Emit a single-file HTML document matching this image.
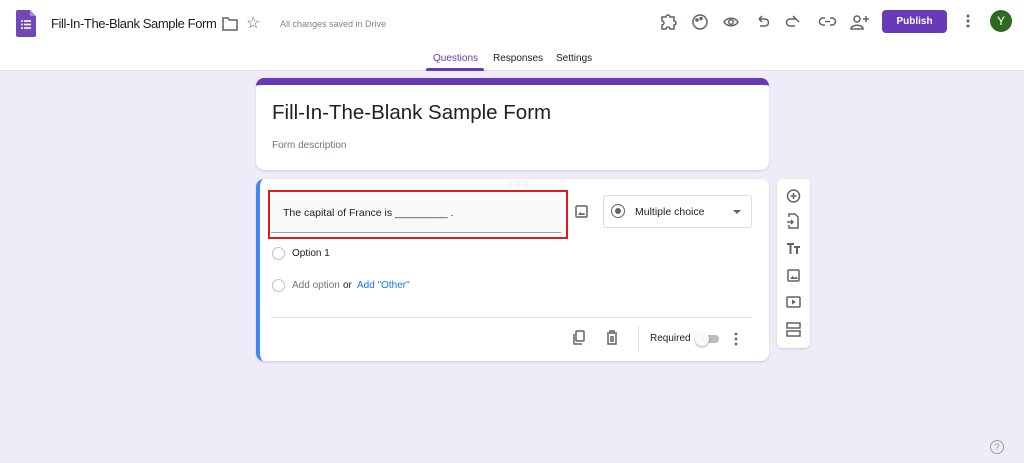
<!DOCTYPE html>
<html><head><style>
*{margin:0;padding:0;box-sizing:border-box}
body{width:1024px;height:463px;background:#f0ebf8;font-family:"Liberation Sans",Arial,sans-serif;position:relative;overflow:hidden;color:#202124}
.abs{position:absolute}
.hdr{left:0;top:0;width:1024px;height:71px;background:#fff;border-bottom:1px solid #e0dde8}
svg{display:block}
</style></head><body>
<div class="abs hdr"></div>
<svg class="abs" style="left:16px;top:10px" width="20" height="27" viewBox="0 0 20 27"><path d="M2 0h12l6 6v19a2 2 0 0 1-2 2H2a2 2 0 0 1-2-2V2a2 2 0 0 1 2-2z" fill="#7248b9"/><path d="M14 0l6 6h-6z" fill="#a48ad4"/><g fill="#fff"><circle cx="6" cy="11" r="1"/><circle cx="6" cy="14.5" r="1"/><circle cx="6" cy="18" r="1"/><rect x="8" y="10.2" width="7" height="1.6"/><rect x="8" y="13.7" width="7" height="1.6"/><rect x="8" y="17.2" width="7" height="1.6"/></g></svg>
<div class="abs" style="left:51px;top:16px;font-size:13px;letter-spacing:-0.4px;color:#202124">Fill-In-The-Blank Sample Form</div>
<svg class="abs" style="left:222px;top:17px" width="16" height="14" viewBox="0 0 16 14"><path d="M1 1h5l1.5 2H15v10H1z" fill="none" stroke="#5f6368" stroke-width="1.5"/></svg>
<div class="abs" style="left:246px;top:13px;font-size:16px;color:#5f6368">☆</div>
<div class="abs" style="left:280px;top:19px;font-size:9px;color:#80868b">All changes saved in Drive</div>
<svg class="abs" style="left:660px;top:13px" width="210" height="18" viewBox="0 0 210 18" fill="none" stroke="#5f6368" stroke-width="1.5">
<path d="M2 4h4a2 2 0 0 1 4 0h4v4a2 2 0 0 1 0 4v4h-4a2 2 0 0 0-4 0H2v-4a2 2 0 0 0 0-4z"/>
<circle cx="40" cy="9" r="7"/><circle cx="37" cy="7" r="1" fill="#5f6368"/><circle cx="41" cy="5.5" r="1" fill="#5f6368"/>
<path d="M64 9c3-5 11-5 14 0c-3 5-11 5-14 0z"/><circle cx="71" cy="9" r="2.3"/>
<path d="M99 6h6a3.5 3.5 0 0 1 0 7h-5M99 6l3-3M99 6l3 3"/>
<path d="M136 6h-6a3.5 3.5 0 0 0 0 7h5M136 6l-3-3M136 6l3 3"/>
<path d="M165 5h-2a3.5 3.5 0 0 0 0 7h2M170 5h2a3.5 3.5 0 0 1 0 7h-2M165 8.5h5"/>
<circle cx="197" cy="6" r="3"/><path d="M191 16c0-5 12-5 12 0z"/><path d="M203 6h6M206 3v6"/>
</svg>
<div class="abs" style="left:882px;top:10px;width:65px;height:23px;background:#673ab7;border-radius:4px;color:#fff;font-size:10px;font-weight:bold;text-align:center;line-height:23px">Publish</div>
<svg class="abs" style="left:966px;top:14px" width="4" height="14"><circle cx="2" cy="2" r="1.5" fill="#5f6368"/><circle cx="2" cy="7" r="1.5" fill="#5f6368"/><circle cx="2" cy="12" r="1.5" fill="#5f6368"/></svg>
<div class="abs" style="left:990px;top:10px;width:22px;height:22px;border-radius:50%;background:#2d6a1f;color:#fff;font-size:12px;text-align:center;line-height:22px">Y</div>
<div class="abs" style="left:433px;top:53px;font-size:10px;color:#673ab7">Questions</div>
<div class="abs" style="left:426px;top:68px;width:58px;height:3px;background:#673ab7;border-radius:2px 2px 0 0"></div>
<div class="abs" style="left:493px;top:53px;font-size:10px;color:#202124">Responses</div>
<div class="abs" style="left:556px;top:53px;font-size:10px;color:#202124">Settings</div>

<div class="abs" style="left:256px;top:78px;width:513px;height:92px;background:#fff;border-radius:8px;border-top:7px solid #673ab7;box-shadow:0 1px 2px rgba(0,0,0,.15)"></div>
<div class="abs" style="left:272px;top:101px;font-size:20.5px;color:#202124">Fill-In-The-Blank Sample Form</div>
<div class="abs" style="left:272px;top:140px;font-size:10px;color:#70757a">Form description</div>

<div class="abs" style="left:256px;top:179px;width:513px;height:182px;background:#fff;border-radius:8px;border-left:4px solid #4285f4;box-shadow:0 1px 2px rgba(0,0,0,.15)"></div>
<div class="abs" style="left:507px;top:181px;font-size:7px;color:#bbb;letter-spacing:1px">⋮⋮⋮</div>
<div class="abs" style="left:268px;top:190px;width:300px;height:49px;border:2px solid #e01b1b"></div>
<div class="abs" style="left:271px;top:193px;width:290px;height:40px;background:#f8f9fa;border-bottom:1px solid #9aa0a6"></div>
<div class="abs" style="left:283px;top:207px;font-size:10.5px;color:#202124">The capital of France is _________ .</div>
<svg class="abs" style="left:575px;top:205px" width="13" height="13" viewBox="0 0 13 13"><rect x="1" y="1" width="11" height="11" rx="1" fill="none" stroke="#5f6368" stroke-width="1.5"/><path d="M3 10l2.5-3 2 2 1.5-1.5L10 10z" fill="#5f6368"/></svg>
<div class="abs" style="left:603px;top:195px;width:149px;height:33px;border:1px solid #dadce0;border-radius:3px"></div>
<div class="abs" style="left:611px;top:204px;width:14px;height:14px;border:1.5px solid #5f6368;border-radius:50%"></div>
<div class="abs" style="left:615px;top:208px;width:6px;height:6px;background:#5f6368;border-radius:50%"></div>
<div class="abs" style="left:635px;top:206px;font-size:10.5px">Multiple choice</div>
<div class="abs" style="left:733px;top:210px;width:0;height:0;border-left:4px solid transparent;border-right:4px solid transparent;border-top:4px solid #5f6368"></div>
<div class="abs" style="left:272px;top:247px;width:13px;height:13px;border:1.5px solid #bdc1c6;border-radius:50%"></div>
<div class="abs" style="left:292px;top:248px;font-size:10px">Option 1</div>
<div class="abs" style="left:272px;top:279px;width:13px;height:13px;border:1.5px solid #bdc1c6;border-radius:50%"></div>
<div class="abs" style="left:292px;top:280px;font-size:10px;color:#70757a">Add option</div>
<div class="abs" style="left:343px;top:280px;font-size:10px;color:#202124">or</div>
<div class="abs" style="left:357px;top:280px;font-size:10px;color:#1a73e8">Add "Other"</div>
<div class="abs" style="left:271px;top:317px;width:481px;height:1px;background:#e0e0e0"></div>
<svg class="abs" style="left:572px;top:330px" width="50" height="16" viewBox="0 0 50 16" fill="none" stroke="#5f6368" stroke-width="1.5"><rect x="4" y="1" width="8" height="10" rx="1"/><path d="M2 4v10h8"/><path d="M35 3h10M38 3V1h4v2M36 4v10h8V4M39 6v6M41 6v6"/></svg>
<div class="abs" style="left:638px;top:326px;width:1px;height:25px;background:#e0e0e0"></div>
<div class="abs" style="left:650px;top:333px;font-size:10px">Required</div>
<div class="abs" style="left:698px;top:335px;width:21px;height:8px;border-radius:4px;background:#bdbdbd"></div>
<div class="abs" style="left:695px;top:332px;width:14px;height:14px;border-radius:50%;background:#fafafa;box-shadow:0 1px 2px rgba(0,0,0,.35)"></div>
<svg class="abs" style="left:734px;top:332px" width="4" height="14"><circle cx="2" cy="2" r="1.4" fill="#5f6368"/><circle cx="2" cy="7" r="1.4" fill="#5f6368"/><circle cx="2" cy="12" r="1.4" fill="#5f6368"/></svg>

<div class="abs" style="left:777px;top:179px;width:33px;height:169px;background:#fff;border-radius:6px;box-shadow:0 1px 2px rgba(0,0,0,.15)"></div>
<svg class="abs" style="left:786px;top:188px" width="15" height="150" viewBox="0 0 15 150" fill="none" stroke="#5f6368" stroke-width="1.5">
<circle cx="7.5" cy="8" r="6"/><path d="M7.5 5v6M4.5 8h6"/>
<path d="M3 29v-3h6l3 3v11H3v-3M1 34h6M5 32l2 2-2 2"/>
<path d="M1 56h7M4.5 56v10M8 59h6M11 59v7" stroke-width="2"/>
<rect x="2" y="82" width="11" height="11" rx="1"/><path d="M4 91l2.5-3 2 2 1.5-1.5L12 91z" fill="#5f6368" stroke="none"/>
<rect x="1" y="109" width="13" height="10" rx="1"/><path d="M6 111.5v5l4-2.5z" fill="#5f6368" stroke="none"/>
<rect x="1" y="135" width="13" height="5"/><rect x="1" y="143" width="13" height="5"/>
</svg>
<div class="abs" style="left:990px;top:440px;width:14px;height:14px;border:1.3px solid #9aa0a6;border-radius:50%;font-size:9px;color:#9aa0a6;text-align:center;line-height:12px">?</div>
</body></html>
